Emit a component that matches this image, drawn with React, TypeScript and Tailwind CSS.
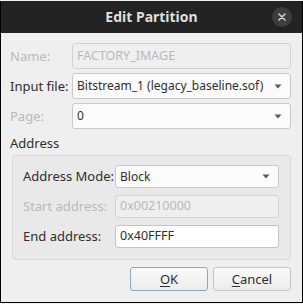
import React from 'react';

function Arrow() {
    return (
        <svg width="8" height="5" viewBox="0 0 8 5" className="shrink-0">
            <path d="M0.5 0.5 L7.5 0.5 L4 4.5 Z" fill="#5a5a5a" />
        </svg>
    );
}

function Combo({ value, height = 'h-[26px]' }: { value: string; height?: string }) {
    return (
        <div className={`flex-1 min-w-0 ${height} flex items-center justify-between pl-[4px] pr-[8px] bg-[#fbfbfb] border border-[#c9c9c9] rounded-[3px] text-[#2e2e2e] text-[12px] whitespace-nowrap`}>
            <span className="leading-normal">{value}</span>
            <Arrow />
        </div>
    );
}

function Field({ value, disabled, height = 'h-[26px]' }: { value: string; disabled?: boolean; height?: string }) {
    return (
        <div
            className={`flex-1 min-w-0 ${height} flex items-center pl-[4px] rounded-[3px] border text-[12.5px] whitespace-nowrap ${disabled
                ? 'bg-[#efefef] border-[#d3d3d3] text-[#b9b9b9]'
                : 'bg-white border-[#c4c4c4] text-[#2e2e2e]'
                }`}
        >
            {value}
        </div>
    );
}

function Button({ label, accent, primary }: { label: string; accent: string; primary?: boolean }) {
    return (
        <button
            className={`w-[78px] h-[24px] flex items-center justify-center rounded-[3px] border bg-gradient-to-b from-[#fafafa] to-[#ececec] text-[#2e2e2e] ${primary ? 'border-[#86aac6]' : 'border-[#c6c6c6]'
                }`}
        >
            <span>
                <span className="underline underline-offset-2">{accent}</span>
                {label}
            </span>
        </button>
    );
}

export default function App() {
    return (
        <div
            className="w-[303px] h-[304px] bg-[#f3f3f3] pt-px pb-px text-[13px] leading-none whitespace-nowrap"
            style={{ fontFamily: '"Noto Sans", "Open Sans", sans-serif' }}
        >
            <div className="h-full flex flex-col border-x border-b border-black bg-[#efefef]">
                {/* Title bar */}
                <div className="h-[32px] shrink-0 bg-[#232323] flex items-center justify-center relative">
                    <span className="font-bold text-[14px] text-[#dedede]">Edit Partition</span>
                    <div className="absolute right-[10px] top-[6px] w-[20px] h-[20px] rounded-full bg-[#3d3d3d] flex items-center justify-center">
                        <svg width="8" height="8" viewBox="0 0 8 8">
                            <path d="M1 1 L7 7 M7 1 L1 7" stroke="#d0d0d0" strokeWidth="1.6" strokeLinecap="round" />
                        </svg>
                    </div>
                </div>

                {/* Body */}
                <div className="flex flex-col pl-[9px] pr-[11px] pt-[10px]">
                    <div className="flex flex-col gap-[4px]">
                        <div className="flex items-center">
                            <span className="w-[62px] shrink-0 text-[#b9b9b9]">Name:</span>
                            <Field value="FACTORY_IMAGE" disabled />
                        </div>
                        <div className="flex items-center">
                            <span className="w-[62px] shrink-0 text-[#2e2e2e]">Input file:</span>
                            <Combo value="Bitstream_1 (legacy_baseline.sof)" />
                        </div>
                        <div className="flex items-center">
                            <span className="w-[62px] shrink-0 text-[#b9b9b9]">Page:</span>
                            <Combo value="0" />
                        </div>
                    </div>

                    <div className="h-[18px] mt-[5px] flex items-center text-[#2e2e2e]">Address</div>

                    <div className="mt-[3px] ml-[2px] border border-[#dadada] rounded-[3px] bg-[#e9e9e9] pl-[10px] pr-[11px] pt-[9px] pb-[11px] flex flex-col gap-[7px]">
                        <div className="flex items-center">
                            <span className="w-[92px] shrink-0 text-[#2e2e2e]">Address Mode:</span>
                            <Combo value="Block" height="h-[23px]" />
                        </div>
                        <div className="flex items-center">
                            <span className="w-[92px] shrink-0 text-[#b9b9b9]">Start address:</span>
                            <Field value="0x00210000" disabled height="h-[23px]" />
                        </div>
                        <div className="flex items-center">
                            <span className="w-[92px] shrink-0 text-[#2e2e2e]">End address:</span>
                            <Field value="0x40FFFF" height="h-[23px]" />
                        </div>
                    </div>

                    <div className="mt-[7px] flex justify-end gap-[5px]">
                        <Button accent="O" label="K" primary />
                        <Button accent="C" label="ancel" />
                    </div>
                </div>
            </div>
        </div>
    );
}
